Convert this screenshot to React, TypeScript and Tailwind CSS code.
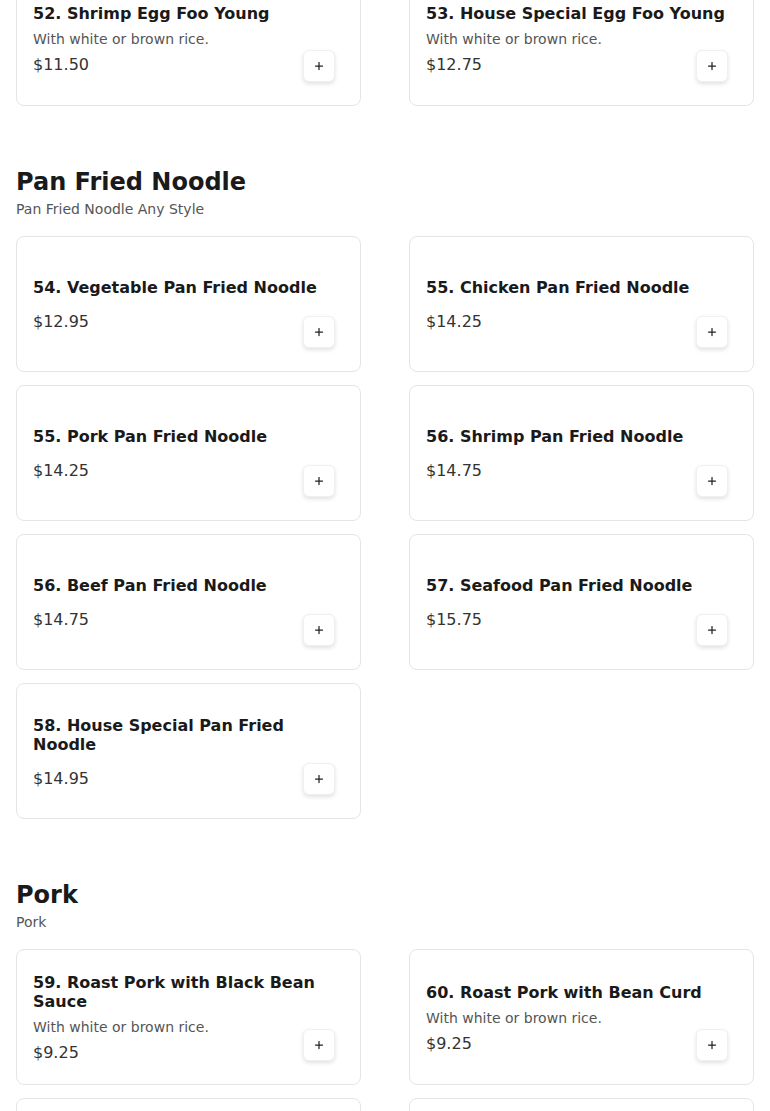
import { Plus } from 'lucide-react';

type Item = { name: string; price: string; desc?: string };

const topItems: Item[] = [
    { name: '52. Shrimp Egg Foo Young', desc: 'With white or brown rice.', price: '$11.50' },
    { name: '53. House Special Egg Foo Young', desc: 'With white or brown rice.', price: '$12.75' },
];

const sections: { title: string; subtitle: string; items: Item[] }[] = [
    {
        title: 'Pan Fried Noodle',
        subtitle: 'Pan Fried Noodle Any Style',
        items: [
            { name: '54. Vegetable Pan Fried Noodle', price: '$12.95' },
            { name: '55. Chicken Pan Fried Noodle', price: '$14.25' },
            { name: '55. Pork Pan Fried Noodle', price: '$14.25' },
            { name: '56. Shrimp Pan Fried Noodle', price: '$14.75' },
            { name: '56. Beef Pan Fried Noodle', price: '$14.75' },
            { name: '57. Seafood Pan Fried Noodle', price: '$15.75' },
            { name: '58. House Special Pan Fried Noodle', price: '$14.95' },
        ],
    },
    {
        title: 'Pork',
        subtitle: 'Pork',
        items: [
            { name: '59. Roast Pork with Black Bean Sauce', desc: 'With white or brown rice.', price: '$9.25' },
            { name: '60. Roast Pork with Bean Curd', desc: 'With white or brown rice.', price: '$9.25' },
            { name: '61. Roast Pork with Broccoli', desc: 'With white or brown rice.', price: '$9.25' },
            { name: '62. Roast Pork with Mixed Vegetables', desc: 'With white or brown rice.', price: '$9.25' },
        ],
    },
];

function MenuCard({ item }: { item: Item }) {
    return (
        <div className="relative h-[136px] flex items-center px-4 pb-6 pt-[28px] bg-white border border-[#e5e5e5] rounded-lg">
            <div className="flex flex-col w-full min-w-0">
                <h3 className="text-base font-bold leading-[19px] text-[#1a1a1a]">{item.name}</h3>
                {item.desc && <p className="text-sm leading-5 mt-1.5 text-[#555]">{item.desc}</p>}
                <p className={`text-base leading-6 text-[#333] ${item.desc ? 'mt-1' : 'mt-[13px]'}`}>{item.price}</p>
            </div>
            {/* add button */}
            <button className="absolute bottom-[23px] right-[25px] w-8 h-8 flex items-center justify-center bg-white rounded-md border border-[#f0f0f0] shadow-[0_2px_4px_rgba(0,0,0,0.12)] text-[#222]">
                <Plus className="w-3 h-3" strokeWidth={2.5} />
            </button>
        </div>
    );
}

export default function App() {
    return (
        <div className="bg-white min-h-screen px-4 font-['DejaVu_Sans',sans-serif]">
            {/* previous section tail */}
            <div className="grid grid-cols-2 gap-x-12 gap-y-[13px] mt-[-30px]">
                {topItems.map((item, i) => (
                    <MenuCard key={i} item={item} />
                ))}
            </div>

            {sections.map((section) => (
                <section key={section.title} className="pt-[62px]">
                    <h2 className="text-2xl font-bold leading-[29px] text-[#1a1a1a]">{section.title}</h2>
                    <p className="text-sm leading-5 mt-[2px] text-[#555]">{section.subtitle}</p>
                    <div className="grid grid-cols-2 gap-x-12 gap-y-[13px] mt-[17px]">
                        {section.items.map((item, i) => (
                            <MenuCard key={i} item={item} />
                        ))}
                    </div>
                </section>
            ))}
        </div>
    );
}
